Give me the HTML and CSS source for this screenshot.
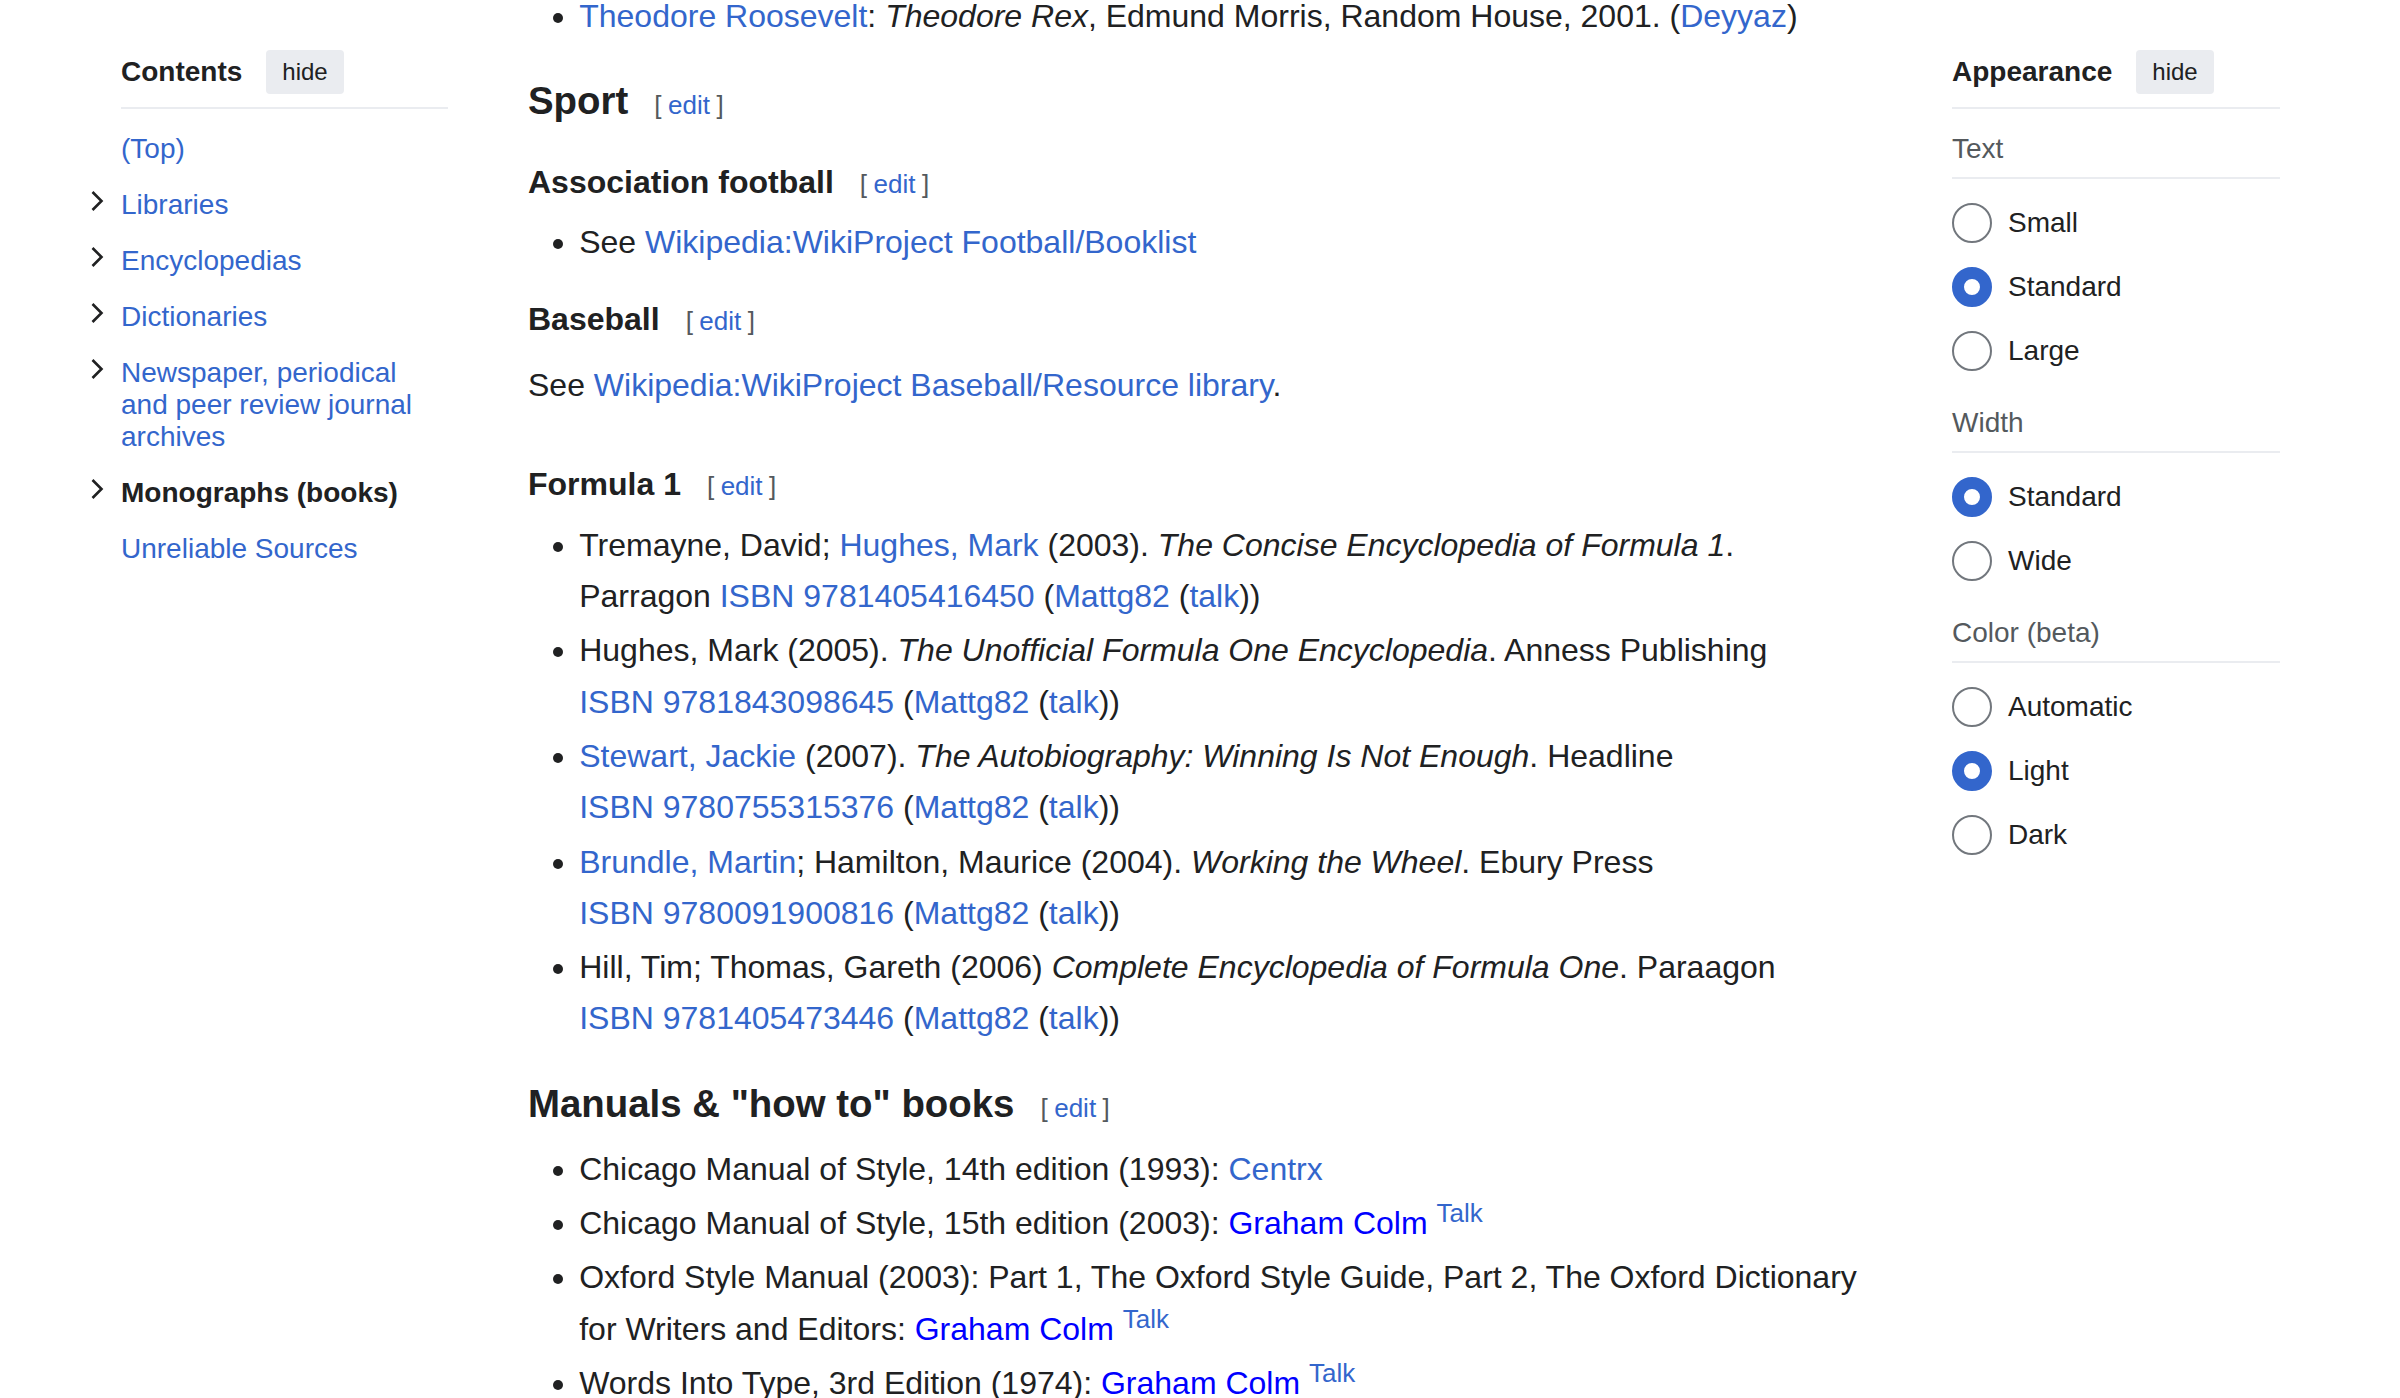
FILE: index.html
```html
<!DOCTYPE html>
<html lang="en">
<head>
<meta charset="utf-8">
<title>Books</title>
<link rel="stylesheet" href="styles.css">
</head>
<body>
<div class="page">
  <nav class="toc">
    <div class="panel-header">
      <span class="panel-title">Contents</span>
      <button class="hide-btn" type="button">hide</button>
    </div>
    <ul class="toc-list">
      <li class="toc-item"><span class="toggle-slot"></span><a class="toc-link" href="#">(Top)</a></li>
      <li class="toc-item"><span class="toggle-slot"><svg class="chev" width="24" height="24" viewBox="0 0 24 24"><polyline points="7.5,3 16.5,12 7.5,21" fill="none" stroke="#202122" stroke-width="2.6"/></svg></span><a class="toc-link" href="#">Libraries</a></li>
      <li class="toc-item"><span class="toggle-slot"><svg class="chev" width="24" height="24" viewBox="0 0 24 24"><polyline points="7.5,3 16.5,12 7.5,21" fill="none" stroke="#202122" stroke-width="2.6"/></svg></span><a class="toc-link" href="#">Encyclopedias</a></li>
      <li class="toc-item"><span class="toggle-slot"><svg class="chev" width="24" height="24" viewBox="0 0 24 24"><polyline points="7.5,3 16.5,12 7.5,21" fill="none" stroke="#202122" stroke-width="2.6"/></svg></span><a class="toc-link" href="#">Dictionaries</a></li>
      <li class="toc-item"><span class="toggle-slot"><svg class="chev" width="24" height="24" viewBox="0 0 24 24"><polyline points="7.5,3 16.5,12 7.5,21" fill="none" stroke="#202122" stroke-width="2.6"/></svg></span><a class="toc-link" href="#">Newspaper, periodical and peer review journal archives</a></li>
      <li class="toc-item"><span class="toggle-slot"><svg class="chev" width="24" height="24" viewBox="0 0 24 24"><polyline points="7.5,3 16.5,12 7.5,21" fill="none" stroke="#202122" stroke-width="2.6"/></svg></span><a class="toc-link active" href="#">Monographs (books)</a></li>
      <li class="toc-item"><span class="toggle-slot"></span><a class="toc-link" href="#">Unreliable Sources</a></li>
    </ul>
  </nav>

  <main class="content">
    <ul class="first">
      <li><a href="#">Theodore Roosevelt</a>: <i>Theodore Rex</i>, Edmund Morris, Random House, 2001. (<a href="#">Deyyaz</a>)</li>
    </ul>
    <h3>Sport<span class="editsection"><span class="bracket open">[</span><a href="#">edit</a><span class="bracket close">]</span></span></h3>
    <h4>Association football<span class="editsection"><span class="bracket open">[</span><a href="#">edit</a><span class="bracket close">]</span></span></h4>
    <ul>
      <li>See <a href="#">Wikipedia:WikiProject Football/Booklist</a></li>
    </ul>
    <h4>Baseball<span class="editsection"><span class="bracket open">[</span><a href="#">edit</a><span class="bracket close">]</span></span></h4>
    <p>See <a href="#">Wikipedia:WikiProject Baseball/Resource library</a>.</p>
    <h4 class="spaced">Formula 1<span class="editsection"><span class="bracket open">[</span><a href="#">edit</a><span class="bracket close">]</span></span></h4>
    <ul>
      <li>Tremayne, David; <a href="#">Hughes, Mark</a> (2003). <i>The Concise Encyclopedia of Formula 1</i>. Parragon <a href="#">ISBN&nbsp;9781405416450</a> (<a href="#">Mattg82</a> (<a href="#">talk</a>))</li>
      <li>Hughes, Mark (2005). <i>The Unofficial Formula One Encyclopedia</i>. Anness Publishing <a href="#">ISBN&nbsp;9781843098645</a> (<a href="#">Mattg82</a> (<a href="#">talk</a>))</li>
      <li><a href="#">Stewart, Jackie</a> (2007). <i>The Autobiography: Winning Is Not Enough</i>. Headline <a href="#">ISBN&nbsp;9780755315376</a> (<a href="#">Mattg82</a> (<a href="#">talk</a>))</li>
      <li><a href="#">Brundle, Martin</a>; Hamilton, Maurice (2004). <i>Working the Wheel</i>. Ebury Press <a href="#">ISBN&nbsp;9780091900816</a> (<a href="#">Mattg82</a> (<a href="#">talk</a>))</li>
      <li>Hill, Tim; Thomas, Gareth (2006) <i>Complete Encyclopedia of Formula One</i>. Paraagon <a href="#">ISBN&nbsp;9781405473446</a> (<a href="#">Mattg82</a> (<a href="#">talk</a>))</li>
    </ul>
    <h3>Manuals &amp; "how to" books<span class="editsection"><span class="bracket open">[</span><a href="#">edit</a><span class="bracket close">]</span></span></h3>
    <ul>
      <li>Chicago Manual of Style, 14th edition (1993): <a href="#">Centrx</a></li>
      <li>Chicago Manual of Style, 15th edition (2003): <a href="#"><span class="sig">Graham Colm</span></a> <sup><a href="#">Talk</a></sup></li>
      <li>Oxford Style Manual (2003): Part 1, The Oxford Style Guide, Part 2, The Oxford Dictionary for Writers and Editors: <a href="#"><span class="sig">Graham Colm</span></a> <sup><a href="#">Talk</a></sup></li>
      <li>Words Into Type, 3rd Edition (1974): <a href="#"><span class="sig">Graham Colm</span></a> <sup><a href="#">Talk</a></sup></li>
    </ul>
  </main>

  <aside class="appearance">
    <div class="panel-header">
      <span class="panel-title">Appearance</span>
      <button class="hide-btn" type="button">hide</button>
    </div>
    <section class="app-section">
      <div class="app-label">Text</div>
      <ul class="radio-list">
        <li class="radio-row"><span class="radio"></span><span>Small</span></li>
        <li class="radio-row"><span class="radio checked"></span><span>Standard</span></li>
        <li class="radio-row"><span class="radio"></span><span>Large</span></li>
      </ul>
    </section>
    <section class="app-section">
      <div class="app-label">Width</div>
      <ul class="radio-list">
        <li class="radio-row"><span class="radio checked"></span><span>Standard</span></li>
        <li class="radio-row"><span class="radio"></span><span>Wide</span></li>
      </ul>
    </section>
    <section class="app-section">
      <div class="app-label">Color (beta)</div>
      <ul class="radio-list">
        <li class="radio-row"><span class="radio"></span><span>Automatic</span></li>
        <li class="radio-row"><span class="radio checked"></span><span>Light</span></li>
        <li class="radio-row"><span class="radio"></span><span>Dark</span></li>
      </ul>
    </section>
  </aside>
</div>
</body>
</html>
```

FILE: styles.css
```css
html, body {
  margin: 0;
  padding: 0;
  overflow: hidden;
  background: #ffffff;
}

body {
  font-family: "Liberation Sans", Arial, Helvetica, sans-serif;
  color: #202122;
}

a {
  color: #3366cc;
  text-decoration: none;
}

.page {
  display: grid;
  grid-template-columns: 327px 1fr 328px;
  padding: 0 120px 0 121px;
  align-items: start;
}

/* ---------- side panels ---------- */
.panel-header {
  display: flex;
  align-items: center;
  gap: 24px;
  height: 44px;
  margin-top: 50px;
  padding-bottom: 13px;
  border-bottom: 2px solid #eaecf0;
}

.panel-title {
  font-size: 28px;
  font-weight: bold;
  line-height: 44px;
}

.hide-btn {
  height: 44px;
  padding: 0 16px;
  border: 0;
  border-radius: 4px;
  background: #eaecf0;
  color: #202122;
  font-family: inherit;
  font-size: 24px;
  line-height: 44px;
}

/* ---------- table of contents ---------- */
.toc-list {
  list-style: none;
  margin: 12px 0 0 -36px;
  padding: 0;
}

.toc-item {
  display: grid;
  grid-template-columns: 36px 1fr;
}

.toggle-slot {
  padding-top: 12px;
}

.chev {
  display: block;
}

.toc-link {
  padding: 12px 0;
  font-size: 28px;
  line-height: 32px;
}

.toc-link.active {
  color: #202122;
  font-weight: bold;
}

/* ---------- main content ---------- */
.content {
  margin: -9px 88px 0 80px;
  font-size: 32px;
  line-height: 51.2px;
}

.content ul {
  margin: 9.6px 0 0 51.2px;
  padding: 0;
  list-style: disc;
}

.content ul.first {
  margin-top: 0;
}

.content li {
  margin-bottom: 3.2px;
}

.content p {
  margin: 15px 0 0;
}

.content h3 {
  margin: 28px 0 0;
  font-size: 38.4px;
  line-height: 61.44px;
  font-weight: bold;
}

.content h4 {
  margin: 25px 0 0;
  font-size: 32px;
  line-height: 51.2px;
  font-weight: bold;
}

.content h4.spaced {
  margin-top: 48px;
}

.editsection {
  margin-left: 26px;
  font-size: 26px;
  line-height: 1;
  font-weight: normal;
}

.bracket {
  color: #54595d;
}

.bracket.open {
  margin-right: 6.5px;
}

.bracket.close {
  margin-left: 6.5px;
}

.sig {
  color: #0000ff;
}

.content sup {
  font-size: 26px;
  line-height: 1;
  vertical-align: super;
}

/* ---------- appearance ---------- */
.app-section {
  padding-top: 18px;
}

.app-label {
  font-size: 28px;
  line-height: 44px;
  color: #54595d;
  padding-bottom: 6px;
  border-bottom: 2px solid #eaecf0;
}

.radio-list {
  list-style: none;
  margin: 12px 0 0;
  padding: 0;
}

.radio-row {
  display: flex;
  align-items: center;
  gap: 16px;
  height: 64px;
  font-size: 28px;
}

.radio {
  box-sizing: border-box;
  width: 40px;
  height: 40px;
  border: 2px solid #72777d;
  border-radius: 50%;
  background: #ffffff;
  flex: none;
}

.radio.checked {
  border: 12px solid #3366cc;
}
```
